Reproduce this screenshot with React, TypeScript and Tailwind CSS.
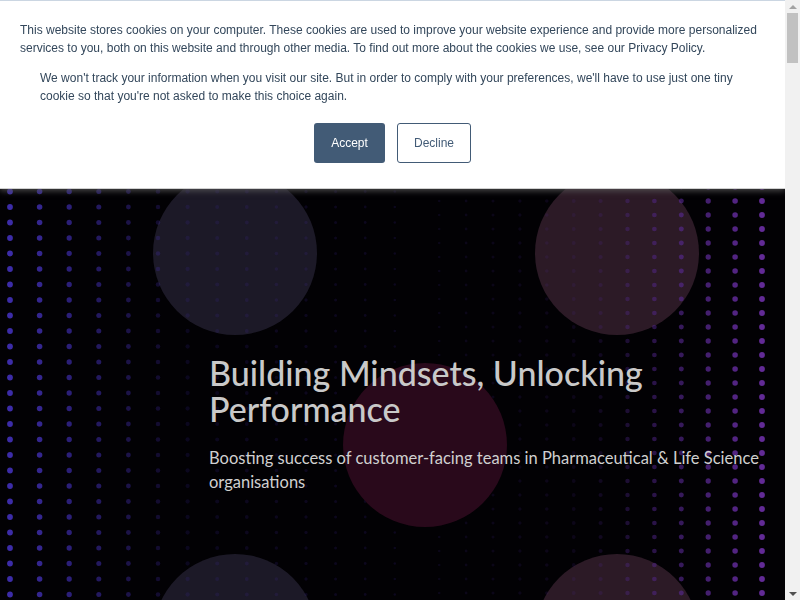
import React from 'react';

type Dot = { x: number; y: number; r: number; c: string; o: number };

const HERO_H = 820;

function mix(a: number[], b: number[], t: number) {
  const v = a.map((n, i) => Math.round(n + (b[i] - n) * t));
  return `rgb(${v[0]},${v[1]},${v[2]})`;
}

const BLUE = [60, 44, 168];
const PURPLE = [98, 42, 150];

function buildDots(): Dot[] {
  const dots: Dot[] = [];
  // left field: wider spacing, strong near the edge
  for (let x = 10; x < 420; x += 29.6) {
    const t = (x - 10) / 410;
    const o = Math.max(0.16, 1 - t * 2);
    const r = 2.9 - t * 1.7;
    for (let y = 5.5; y < HERO_H; y += 15.5) {
      dots.push({ x, y, r, c: mix(BLUE, [70, 44, 160], t), o });
    }
  }
  // right field: tighter spacing, purple
  for (let x = 762; x > 420; x -= 26.9) {
    const t = (762 - x) / 342;
    const o = Math.max(0.14, 1 - t * 1.7);
    const r = 2.9 - t * 1.7;
    for (let y = 5; y < HERO_H; y += 14) {
      dots.push({ x, y, r, c: mix(PURPLE, [64, 40, 150], t), o });
    }
  }
  return dots;
}

const DOTS = buildDots();

// soft circles sit under the dot field, the maroon ones cover it
const BACK_CIRCLES = [
  { cx: 235, cy: 253, fill: '#1c1927' },
  { cx: 617, cy: 253, fill: '#2c1a26' },
  { cx: 235, cy: 636, fill: '#1c1927' },
  { cx: 617, cy: 636, fill: '#2c1a26' },
];
const FRONT_CIRCLES = [
  { cx: 425, cy: 62, fill: '#29091b' },
  { cx: 425, cy: 445, fill: '#29091b' },
];

function HeroBackdrop() {
  return (
    <svg className="absolute inset-0" width="785" height={HERO_H} viewBox={`0 0 785 ${HERO_H}`} aria-hidden>
      <rect width="785" height={HERO_H} fill="#020104" />
      {BACK_CIRCLES.map((c, i) => (
        <circle key={i} cx={c.cx} cy={c.cy} r="82" fill={c.fill} />
      ))}
      {DOTS.map((d, i) => (
        <circle key={i} cx={d.x} cy={d.y} r={d.r} fill={d.c} opacity={d.o} />
      ))}
      {FRONT_CIRCLES.map((c, i) => (
        <circle key={i} cx={c.cx} cy={c.cy} r="82" fill={c.fill} />
      ))}
    </svg>
  );
}

function CookieBanner() {
  return (
    <div className="fixed left-0 top-0 z-20 w-[785px] border-t border-b border-t-[#cbd6e2] border-b-[#d0d0d0] bg-white px-5 pt-[20px] pb-[25px] font-['Liberation_Sans',Arial,sans-serif] text-[12px] leading-[18px] text-[#33475b] shadow-[0_2px_6px_rgba(90,90,90,0.8)]">
      <p>
        This website stores cookies on your computer. These cookies are used to improve your website experience and provide more
        personalized services to you, both on this website and through other media. To find out more about the cookies we use, see
        our Privacy Policy.
      </p>
      <p className="mt-3 pl-5">
        We won't track your information when you visit our site. But in order to comply with your preferences, we'll have to use
        just one tiny cookie so that you're not asked to make this choice again.
      </p>
      <div className="mt-[18px] flex justify-center gap-3">
        <button className="h-10 w-[71px] rounded-[3px] bg-[#425b76] text-[12px] text-white">Accept</button>
        <button className="h-10 w-[74px] rounded-[3px] border border-[#425b76] bg-white text-[12px] text-[#425b76]">
          Decline
        </button>
      </div>
    </div>
  );
}

function Scrollbar() {
  return (
    <div className="fixed right-0 top-0 z-30 flex h-screen w-[15px] flex-col items-center bg-[#f1f1f1]">
      <div className="flex h-[13px] w-full items-center justify-center">
        <div className="h-0 w-0 border-x-[4px] border-b-[4px] border-x-transparent border-b-[#a3a3a3]" />
      </div>
      <div className="h-[50px] w-[11px] bg-[#c1c1c1]" />
      <div className="flex-1" />
      <div className="flex h-[13px] w-full items-center justify-center">
        <div className="h-0 w-0 border-x-[4px] border-t-[4px] border-x-transparent border-t-[#505050]" />
      </div>
    </div>
  );
}

export default function App() {
  return (
    <div className="min-h-[6800px] w-[785px] bg-white">
      <CookieBanner />
      <Scrollbar />
      <section className="relative h-[820px] w-[785px] overflow-hidden bg-black">
        <HeroBackdrop />
        <div className="relative z-10 pl-[209px] pr-6 pt-[355px] font-['Lato',sans-serif]">
          <h1 className="max-w-[480px] text-[34px] font-medium leading-[36px] text-[#c9c9c9]">
            Building Mindsets, Unlocking Performance
          </h1>
          <p className="mt-[19px] max-w-[560px] text-[16.5px] leading-[24px] text-[#d0d0d0]">
            Boosting success of customer-facing teams in Pharmaceutical &amp; Life Science organisations
          </p>
        </div>
      </section>
    </div>
  );
}
